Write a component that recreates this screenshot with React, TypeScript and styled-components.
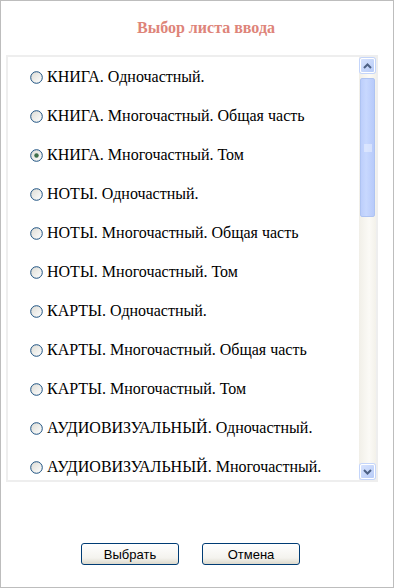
import React from "react";
import styled, { createGlobalStyle } from "styled-components";

const Global = createGlobalStyle`
  html, body { margin: 0; padding: 0; background: #ffffff; }
  body { width: 396px; height: 588px; overflow: hidden; }
`;

const Frame = styled.div`
  box-sizing: border-box;
  width: 394px;
  height: 588px;
  border: 1px solid #bdbdbd;
  background: #ffffff;
  display: flex;
  flex-direction: column;
`;

const Title = styled.div`
  height: 54px;
  box-sizing: border-box;
  padding: 18px 0 0 18px;
  text-align: center;
  font-family: "Liberation Serif", "Times New Roman", serif;
  font-weight: bold;
  font-size: 16px;
  color: #de8479;
`;

const ListBox = styled.div`
  box-sizing: border-box;
  margin-left: 5px;
  width: 372px;
  height: 427px;
  border: 2px solid #eeeeee;
  display: flex;
  background: #ffffff;
`;

const Items = styled.div`
  flex: 1;
  overflow: hidden;
  padding-left: 22px;
`;

const Row = styled.label`
  height: 39px;
  display: flex;
  align-items: center;
  font-family: "Liberation Serif", "Times New Roman", serif;
  font-size: 16px;
  color: #000000;
  white-space: nowrap;
`;

const RadioSvg = styled.svg`
  width: 13px;
  height: 13px;
  flex: none;
  margin-right: 4px;
  margin-top: 1px;
`;

const Scrollbar = styled.div`
  width: 17px;
  display: flex;
  flex-direction: column;
  align-items: center;
  padding-top: 1px;
  background: linear-gradient(to right, #f1efe8, #fbfaf6 60%, #f3f1ea);
`;

const ScrollBtn = styled.div`
  box-sizing: border-box;
  width: 15px;
  height: 15px;
  border-radius: 2px;
  border: 1px solid #ffffff;
  background: linear-gradient(to bottom right, #d6e2fd, #b8ccf8);
  box-shadow: 0 0 0 1px #c4d5fa;
  display: flex;
  align-items: center;
  justify-content: center;
`;

const Thumb = styled.div`
  box-sizing: border-box;
  margin-top: 5px;
  width: 15px;
  height: 139px;
  border-radius: 2px;
  border: 1px solid #aec3f2;
  background: linear-gradient(to right, #bccefb, #c8d8fe 40%, #b7cafa);
  display: flex;
  align-items: center;
  justify-content: center;
`;

const Spacer = styled.div`
  flex: 1;
`;

const BottomGap = styled.div`
  height: 1px;
`;

const Buttons = styled.div`
  display: flex;
  justify-content: center;
  gap: 23px;
  padding: 61px 13px 0 0;
`;

const Button = styled.button`
  box-sizing: border-box;
  width: 98px;
  height: 22px;
  border: 1px solid #003c74;
  border-radius: 3px;
  background: linear-gradient(to bottom, #ffffff, #f4f3ee 70%, #dcd9cc);
  font-family: "Liberation Sans", Arial, sans-serif;
  font-size: 13px;
  color: #000000;
  padding: 0;
`;

const Radio = ({ checked }: { checked?: boolean }) => (
  <RadioSvg viewBox="0 0 13 13">
    <defs>
      <linearGradient id="rg" x1="0" y1="0" x2="1" y2="1">
        <stop offset="0" stopColor="#dcdbd4" />
        <stop offset="1" stopColor="#ffffff" />
      </linearGradient>
    </defs>
    <circle cx="6.5" cy="6.5" r="5.8" fill="url(#rg)" stroke="#1c5180" strokeWidth="1" />
    {checked && <circle cx="6.5" cy="6.5" r="2.2" fill="#3d6e4a" />}
  </RadioSvg>
);

const items = [
  "КНИГА. Одночастный.",
  "КНИГА. Многочастный. Общая часть",
  "КНИГА. Многочастный. Том",
  "НОТЫ. Одночастный.",
  "НОТЫ. Многочастный. Общая часть",
  "НОТЫ. Многочастный. Том",
  "КАРТЫ. Одночастный.",
  "КАРТЫ. Многочастный. Общая часть",
  "КАРТЫ. Многочастный. Том",
  "АУДИОВИЗУАЛЬНЫЙ. Одночастный.",
  "АУДИОВИЗУАЛЬНЫЙ. Многочастный.",
];

export default function App() {
  return (
    <>
      <Global />
      <Frame>
        <Title>Выбор листа ввода</Title>
        <ListBox>
          <Items>
            {items.map((t, i) => (
              <Row key={i}>
                <Radio checked={i === 2} />
                {t}
              </Row>
            ))}
          </Items>
          <Scrollbar>
            <ScrollBtn>
              <svg width="9" height="6" viewBox="0 0 9 6">
                <path d="M1 5 L4.5 1.5 L8 5" stroke="#4d6185" strokeWidth="2" fill="none" />
              </svg>
            </ScrollBtn>
            <Thumb>
              <svg width="8" height="8" viewBox="0 0 8 8">
                <path d="M0 1 H8 M0 3 H8 M0 5 H8 M0 7 H8" stroke="#eef3ff" strokeWidth="1" />
              </svg>
            </Thumb>
            <Spacer />
            <ScrollBtn>
              <svg width="9" height="6" viewBox="0 0 9 6">
                <path d="M1 1 L4.5 4.5 L8 1" stroke="#4d6185" strokeWidth="2" fill="none" />
              </svg>
            </ScrollBtn>
            <BottomGap />
          </Scrollbar>
        </ListBox>
        <Buttons>
          <Button>Выбрать</Button>
          <Button>Отмена</Button>
        </Buttons>
      </Frame>
    </>
  );
}
